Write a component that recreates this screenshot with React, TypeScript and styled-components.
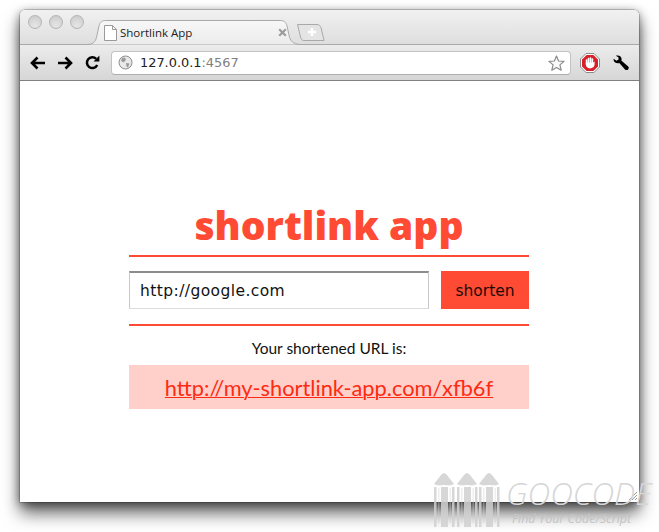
import React from 'react'
import styled, { createGlobalStyle } from 'styled-components'

const GlobalStyle = createGlobalStyle`
  html, body {
    margin: 0;
    padding: 0;
    background: #fff;
    overflow: hidden;
  }
`

const Page = styled.div`
  position: relative;
  width: 659px;
  height: 532px;
  padding: 10px 20px 0 20px;
  box-sizing: border-box;
  overflow: hidden;
`

const Window = styled.div`
  width: 619px;
  height: 492px;
  display: flex;
  flex-direction: column;
  border-radius: 5px 5px 0 0;
  background: #fff;
  box-shadow: 0 11px 17px rgba(0, 0, 0, 0.62), 0 2px 10px rgba(0, 0, 0, 0.45), 0 0 0 0.5px rgba(0, 0, 0, 0.35);
  overflow: hidden;
`

const TitleBar = styled.div`
  height: 35px;
  flex: none;
  display: flex;
  align-items: flex-start;
  box-sizing: border-box;
  padding: 5px 0 0 8px;
  background: linear-gradient(#f1f1f1, #dedede);
  border-bottom: 1px solid #a9a9a9;
`

const Lights = styled.div`
  display: flex;
  gap: 7px;
  width: 60px;
  flex: none;
`

const Light = styled.span`
  width: 14px;
  height: 14px;
  box-sizing: border-box;
  border-radius: 50%;
  border: 1px solid #b4b4b4;
  background: radial-gradient(circle at 50% 80%, #e6e6e6, #c9c9c9);
`

const Tab = styled.div`
  position: relative;
  width: 212px;
  height: 25px;
  margin-top: 5px;
  flex: none;
  display: flex;
  align-items: center;
  padding: 0 13px 0 16px;
  box-sizing: border-box;
`

const TabShape = styled.svg`
  position: absolute;
  left: 0;
  top: 0;
`

const TabIcon = styled.svg`
  position: relative;
  flex: none;
`

const TabTitle = styled.span`
  position: relative;
  flex: 1;
  margin-left: 3px;
  font: 11.5px 'Open Sans', 'Liberation Sans', sans-serif;
  color: #222;
`

const TabClose = styled.svg`
  position: relative;
  flex: none;
`

const NewTab = styled.svg`
  flex: none;
  margin: 9px 0 0 -3px;
`

const Toolbar = styled.div`
  height: 36px;
  flex: none;
  display: flex;
  align-items: center;
  box-sizing: border-box;
  padding: 0 8px 0 10px;
  background: linear-gradient(#ececec, #d6d6d6);
  border-bottom: 1px solid #808080;
`

const NavIcon = styled.svg<{ $gap?: number }>`
  flex: none;
  margin-right: ${(p) => p.$gap ?? 0}px;
`

const Omnibox = styled.div`
  flex: none;
  width: 460px;
  height: 24px;
  margin-right: 9px;
  margin-left: 1px;
  display: flex;
  align-items: center;
  box-sizing: border-box;
  padding: 0 5px 0 6px;
  background: #fff;
  border: 1px solid #c2c2c2;
  border-bottom-color: #adadad;
  border-radius: 4px;
`

const Address = styled.span`
  flex: 1;
  margin-left: 7px;
  font: 12.9px 'DejaVu Sans', sans-serif;
  color: #222;
`

const Port = styled.span`
  color: #808080;
`

const Content = styled.main`
  flex: 1;
  padding-left: 109px;
`

const Column = styled.div`
  width: 400px;
  margin-top: 124px;
  display: flex;
  flex-direction: column;
  font-family: Lato, 'Open Sans', sans-serif;
`

const Title = styled.h1`
  margin: 0;
  height: 50px;
  line-height: 40px;
  text-align: center;
  font-family: 'Open Sans', sans-serif;
  font-size: 39px;
  font-weight: 800;
  color: #ff4b33;
  border-bottom: 2px solid #ff4b33;
  white-space: nowrap;
`

const Form = styled.form`
  display: flex;
  justify-content: space-between;
  padding: 14px 0 15px;
  border-bottom: 2px solid #ff4b33;
`

const UrlInput = styled.input`
  width: 300px;
  height: 38px;
  box-sizing: border-box;
  padding: 0 10px;
  border: 1px solid #c8c8c8;
  border-top: 2px solid #8c8c8c;
  border-bottom-color: #dcdcdc;
  outline: none;
  font: 15.5px 'DejaVu Sans', sans-serif;
  letter-spacing: 0.42px;
  color: #111;
`

const Shorten = styled.button`
  width: 88px;
  height: 38px;
  padding: 2px 0 0;
  border: 0;
  background: #ff4b33;
  font: 15.5px 'DejaVu Sans', sans-serif;
  color: #1a0a06;
`

const Caption = styled.p`
  margin: 0;
  padding-top: 12px;
  height: 39px;
  box-sizing: border-box;
  text-align: center;
  font-size: 15.5px;
  line-height: 20px;
  color: #111;
`

const Result = styled.div`
  height: 44px;
  display: flex;
  align-items: center;
  justify-content: center;
  background: #ffd0ca;
`

const ResultLink = styled.a`
  font-size: 21.8px;
  color: #ff2a12;
  text-decoration: underline;
  text-decoration-thickness: 1px;
`

const Watermark = styled.div`
  position: absolute;
  left: 434px;
  top: 473px;
  width: 225px;
  height: 56px;
  display: flex;
  align-items: flex-start;
  gap: 6px;
`

const WatermarkLogo = styled.svg`
  flex: none;
`

const Brand = styled.div`
  display: flex;
  flex-direction: column;
  padding-top: 4px;
`

const BrandName = styled.span`
  font: italic 300 31.5px/32px 'Open Sans', sans-serif;
  color: #d6d6d6;
  white-space: nowrap;
`

const BrandTag = styled.span`
  font: italic 400 12.5px/14px 'Open Sans', sans-serif;
  color: #c4c4c4;
  margin: 3px 0 0 6px;
  white-space: nowrap;
`

const Grip = styled.svg`
  position: absolute;
  left: 628px;
  top: 491px;
`

const Pencil = () => (
  <g fill="#d0d0d0" fillOpacity="0.85">
    <path d="M10 0 C11 0 12 1 13 2 L20 11 C17 13 14 12 10 12 C6 12 3 13 0 11 L7 2 C8 1 9 0 10 0 Z" />
    <path d="M0 14 H2.5 V54 H0 Z M7 14 H14 V54 H7 Z M18 14 H20.5 V54 H18 Z" />
    <path d="M4.2 15 H5.4 V50 H4.2 Z M15.6 15 H16.8 V50 H15.6 Z" fillOpacity="0.45" />
  </g>
)

export default function App() {
  return (
    <Page>
      <GlobalStyle />
      <Window>
        <TitleBar>
          <Lights>
            <Light />
            <Light />
            <Light />
          </Lights>
          <Tab>
            <TabShape width="212" height="25" viewBox="0 0 212 25">
              <defs>
                <linearGradient id="tabFill" x1="0" y1="0" x2="0" y2="1">
                  <stop offset="0" stopColor="#f7f7f7" />
                  <stop offset="1" stopColor="#ececec" />
                </linearGradient>
              </defs>
              <path
                d="M0 24.5 C6 24 8 21 9 15 L11 6 C12 2 14 0.5 18 0.5 L192 0.5 C196 0.5 198 2 199 6 L201 15 C202 21 205 24 212 24.5"
                fill="url(#tabFill)"
                stroke="#a9a9a9"
              />
            </TabShape>
            <TabIcon width="13" height="16" viewBox="0 0 13 16">
              <path d="M0.5 0.5 H8.5 L12.5 4.5 V15.5 H0.5 Z" fill="#fff" stroke="#9a9a9a" />
              <path d="M8.5 0.5 V4.5 H12.5" fill="none" stroke="#9a9a9a" />
            </TabIcon>
            <TabTitle>Shortlink App</TabTitle>
            <TabClose width="9" height="9" viewBox="0 0 9 9">
              <path d="M1.2 1.2 L7.8 7.8 M7.8 1.2 L1.2 7.8" stroke="#9c9c9c" strokeWidth="2.2" />
            </TabClose>
          </Tab>
          <NewTab width="28" height="17" viewBox="0 0 28 17">
            <path d="M0.5 0.5 H20 C22 0.5 23 1.5 24 3.5 L27 16.5 H7 C5 16.5 4 15 3.5 13 Z" fill="#e4e4e4" stroke="#a9a9a9" />
            <path d="M15 4 V12 M11 8 H19" stroke="#fff" strokeWidth="2.4" />
          </NewTab>
        </TitleBar>
        <Toolbar>
          <NavIcon width="16" height="14" viewBox="0 0 16 14" $gap={11}>
            <path d="M7.5 1.5 L2 7 L7.5 12.5 M2.5 7 H15" fill="none" stroke="#000" strokeWidth="2.6" />
          </NavIcon>
          <NavIcon width="16" height="14" viewBox="0 0 16 14" $gap={12}>
            <path d="M8.5 1.5 L14 7 L8.5 12.5 M13.5 7 H1" fill="none" stroke="#000" strokeWidth="2.6" />
          </NavIcon>
          <NavIcon width="15" height="15" viewBox="0 0 15 15" $gap={10}>
            <path d="M12.2 10 A5.4 5.4 0 1 1 11.2 3.9" fill="none" stroke="#000" strokeWidth="2.5" />
            <path d="M8.6 6.4 H14.4 V0.6 Z" fill="#000" />
          </NavIcon>
          <Omnibox>
            <svg width="15" height="15" viewBox="0 0 15 15">
              <circle cx="7.5" cy="7.5" r="6.5" fill="#e9e9e9" stroke="#8a8a8a" />
              <path d="M4 3 L7 2.4 L8 5 L5.5 7.5 L3 6 Z M8 8 L11.5 8.5 L10 12.5 L8.5 11.5 Z" fill="#9a9a9a" />
            </svg>
            <Address>
              127.0.0.1<Port>:4567</Port>
            </Address>
            <svg width="17" height="16" viewBox="0 0 17 16">
              <path
                d="M8.5 1 L10.6 6 L16 6.4 L11.9 9.9 L13.2 15.2 L8.5 12.4 L3.8 15.2 L5.1 9.9 L1 6.4 L6.4 6 Z"
                fill="#fafafa"
                stroke="#8a8a8a"
                strokeWidth="1.2"
                strokeLinejoin="round"
              />
            </svg>
          </Omnibox>
          <NavIcon width="20" height="20" viewBox="0 0 20 20" $gap={13}>
            <path d="M6 0.5 H14 L19.5 6 V14 L14 19.5 H6 L0.5 14 V6 Z" fill="#fff" stroke="#8a8a8a" />
            <path d="M6.6 2 H13.4 L18 6.6 V13.4 L13.4 18 H6.6 L2 13.4 V6.6 Z" fill="#d8202a" />
            <path d="M6.6 7 V11 M8.5 5.5 V11 M10.5 5 V11 M12.4 6 V11" stroke="#fff" strokeWidth="1.6" strokeLinecap="round" />
            <path d="M5.8 9.5 H13.2 L14.6 8.6 V11.5 C14.6 13.8 12.6 15.4 10 15.4 C7.6 15.4 5.8 13.8 5.8 11.5 Z" fill="#fff" />
          </NavIcon>
          <NavIcon width="16" height="16" viewBox="0 0 16 16">
            <path
              d="M0.6 3.8 L3.4 5.8 L5.6 4.6 L5.4 2.2 L2.8 0.8 C5.6 -0.4 8.6 1.2 8.6 4 C8.6 4.7 8.5 5.2 8.3 5.6 L15.2 11.4 C16.2 12.6 15.8 13.7 15.1 14.4 C14.3 15.3 13 15.4 12 14.4 L6.3 8 C3.2 8.8 0 6.9 0.6 3.8 Z"
              fill="#000"
            />
          </NavIcon>
        </Toolbar>
        <Content>
          <Column>
            <Title>shortlink app</Title>
            <Form>
              <UrlInput defaultValue="http://google.com" />
              <Shorten type="button">shorten</Shorten>
            </Form>
            <Caption>Your shortened URL is:</Caption>
            <Result>
              <ResultLink href="#">http://my-shortlink-app.com/xfb6f</ResultLink>
            </Result>
          </Column>
        </Content>
      </Window>
      <Grip width="10" height="10" viewBox="0 0 10 10">
        <path d="M1 9 L9 1 M4 9 L9 4 M7 9 L9 7" stroke="#9a9a9a" strokeWidth="1" />
      </Grip>
      <Watermark>
        <WatermarkLogo width="66" height="54" viewBox="0 0 66 54">
          <Pencil />
          <g transform="translate(23 0)">
            <Pencil />
          </g>
          <g transform="translate(45 0)">
            <Pencil />
          </g>
        </WatermarkLogo>
        <Brand>
          <BrandName>GOOCODE</BrandName>
          <BrandTag>Find Your Code/Script</BrandTag>
        </Brand>
      </Watermark>
    </Page>
  )
}
